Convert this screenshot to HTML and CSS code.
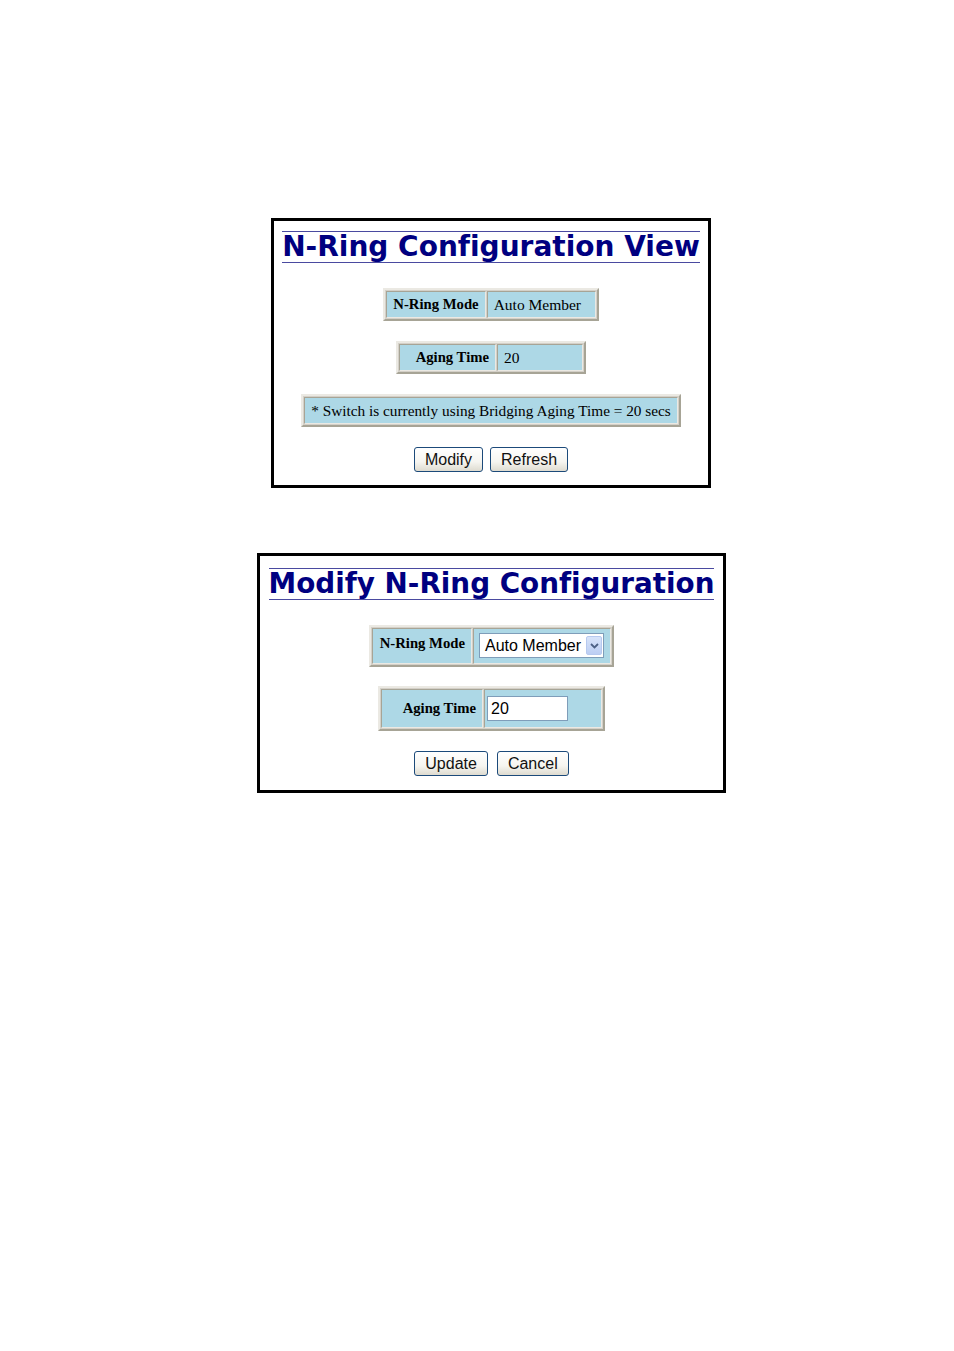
FILE: index.html
```html
<!DOCTYPE html>
<html>
<head>
<meta charset="utf-8">
<link rel="stylesheet" href="styles.css">
</head>
<body>
<div class="panel panel-view">
  <h1 class="title"><span>N-Ring Configuration View</span></h1>
  <table class="grid grid-mode">
    <tr><td class="lbl lbl-mode">N-Ring Mode</td><td class="val val-mode">Auto Member</td></tr>
  </table>
  <table class="grid grid-age">
    <tr><td class="lbl lbl-age">Aging Time</td><td class="val val-age">20</td></tr>
  </table>
  <table class="grid grid-note">
    <tr><td class="note">* Switch is currently using Bridging Aging Time = 20 secs</td></tr>
  </table>
  <div class="buttons">
    <button class="btn">Modify</button>
    <button class="btn">Refresh</button>
  </div>
</div>

<div class="panel panel-modify">
  <h1 class="title"><span>Modify N-Ring Configuration</span></h1>
  <table class="grid grid-mode2">
    <tr><td class="lbl lbl-mode2">N-Ring Mode</td><td class="val val-mode2">
      <div class="select"><span class="select-text">Auto Member</span><span class="select-arrow"><svg width="9" height="6" viewBox="0 0 9 6"><path d="M1 1 L4.5 4.5 L8 1" fill="none" stroke="#4d6185" stroke-width="1.8"/></svg></span></div>
    </td></tr>
  </table>
  <table class="grid grid-age2">
    <tr><td class="lbl lbl-age2">Aging Time</td><td class="val val-age2"><div class="input">20</div></td></tr>
  </table>
  <div class="buttons buttons2">
    <button class="btn btn-update">Update</button>
    <button class="btn btn-cancel">Cancel</button>
  </div>
</div>
</body>
</html>
```

FILE: styles.css
```css
html, body {
  margin: 0;
  padding: 0;
  background: #ffffff;
}

body {
  width: 954px;
  height: 1351px;
  font-family: "Liberation Serif", "Times New Roman", serif;
}

.panel {
  box-sizing: border-box;
  border: 3px solid #000000;
  background: #ffffff;
  display: flex;
  flex-direction: column;
  align-items: center;
}

.panel-view {
  margin: 218px 0 0 271px;
  width: 440px;
  height: 270px;
  padding-top: 10px;
}

.panel-modify {
  margin: 65px 0 0 257px;
  width: 469px;
  height: 240px;
  padding-top: 12px;
}

.title {
  margin: 0;
  font-family: "DejaVu Sans", Verdana, sans-serif;
  font-weight: bold;
  font-size: 28px;
  line-height: 30px;
  color: #000080;
  border-top: 1px solid #4a4aa0;
  border-bottom: 1px solid #4a4aa0;
  white-space: nowrap;
  font-variant-ligatures: none;
}

.panel-modify .title {
  font-size: 27.8px;
}

.grid {
  border-collapse: separate;
  border-spacing: 1px;
  background: #d4d0c8;
  border: 2px solid;
  border-color: #ebe9e3 #a7a496 #a7a496 #ebe9e3;
}

.grid td {
  background: #add8e6;
  border: 1px solid;
  border-color: #a7a496 #ebe9e3 #ebe9e3 #a7a496;
  font-size: 15.5px;
  color: #000000;
  white-space: nowrap;
  padding: 0 6px;
  height: 25px;
}

.grid td.lbl {
  font-weight: bold;
  text-align: right;
  font-size: 14.7px;
}

.grid-mode { margin-top: 25px; }
.lbl-mode { width: 84px; }
.val-mode { width: 95px; }

.grid-age { margin-top: 20px; }
.lbl-age { width: 83px; }
.val-age { width: 72px; }

.grid-note { margin-top: 20px; }
.grid td.note { padding: 0 6px; font-size: 15.3px; }

.buttons {
  margin-top: 20px;
  display: flex;
  gap: 7px;
}

.btn {
  font-family: "Liberation Sans", Arial, sans-serif;
  font-size: 16px;
  height: 25px;
  padding: 0 10px;
  border: 1px solid #1c4a7a;
  border-radius: 3px;
  background: linear-gradient(#ffffff 0%, #f6f5f0 60%, #dedbd0 100%);
  color: #111111;
  line-height: 22px;
}

/* modify panel */
.grid-mode2 { margin-top: 25px; }
.grid-mode2 td { height: 34px; }
.grid td.lbl-mode2 { width: 86px; height: 28px; vertical-align: middle; padding-bottom: 6px; }
.grid td.val-mode2 { width: 126px; padding: 0 5px; }

.select {
  box-sizing: border-box;
  width: 125px;
  height: 25px;
  margin-top: 3px;
  margin-bottom: 4px;
  border: 1px solid #7f9db9;
  background: #ffffff;
  display: flex;
  align-items: center;
  justify-content: space-between;
  padding: 0 1px 0 5px;
  font-family: "Liberation Sans", Arial, sans-serif;
  font-size: 16px;
}

.select-arrow {
  width: 16px;
  height: 19px;
  background: linear-gradient(#d8e4fa, #bccef3);
  border: 1px solid #b7c9ef;
  border-radius: 2px;
  display: flex;
  align-items: center;
  justify-content: center;
  box-sizing: border-box;
}

.grid-age2 { margin-top: 19px; }
.grid-age2 td { height: 37px; }
.grid td.lbl-age2 { width: 88px; }
.grid td.val-age2 { width: 110px; padding: 0 4px 0 2px; }

.input {
  box-sizing: border-box;
  width: 81px;
  height: 25px;
  border: 1px solid #7f9db9;
  background: #ffffff;
  font-family: "Liberation Sans", Arial, sans-serif;
  font-size: 16px;
  line-height: 23px;
  padding-left: 3px;
}

.buttons2 { margin-top: 20px; gap: 9px; }
```
